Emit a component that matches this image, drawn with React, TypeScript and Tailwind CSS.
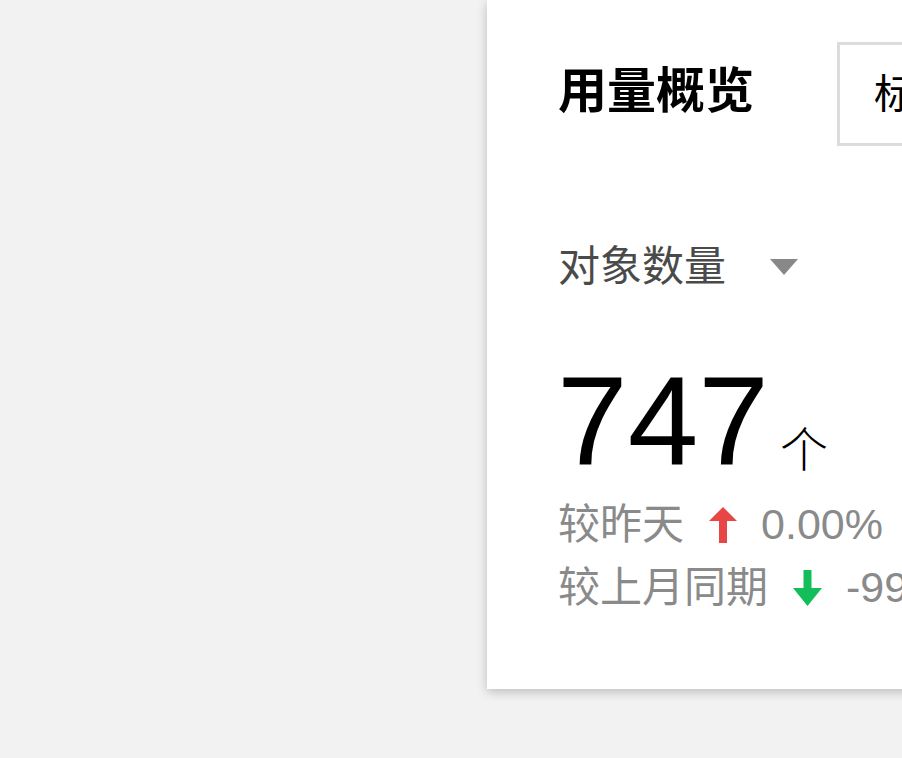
import React from "react";

const font = "font-['Liberation_Sans','Noto_Sans_CJK_SC',sans-serif]";

function ArrowUp() {
  return (
    <svg width="28" height="36" viewBox="0 0 28 36" className="shrink-0">
      <polygon points="14,0 28,14 0,14" fill="#e84545" />
      <rect x="10" y="13" width="8" height="23" fill="#e84545" />
    </svg>
  );
}

function ArrowDown() {
  return (
    <svg width="29" height="36" viewBox="0 0 29 36" className="shrink-0">
      <rect x="10.5" y="0" width="8" height="20" fill="#12bd5a" />
      <polygon points="0,18 29,18 14.5,36" fill="#12bd5a" />
    </svg>
  );
}

export default function App() {
  return (
    <div className={`w-[902px] h-[758px] overflow-hidden bg-[#f2f2f2] ${font}`}>
      <div className="ml-[487px] w-[560px] h-[689px] bg-white shadow-[0_3px_10px_rgba(0,0,0,0.22)] pl-[71px] pt-[42px]">
        {/* header */}
        <div className="flex items-center">
          <div className="w-[279px] shrink-0 whitespace-nowrap text-[49px] leading-none font-bold text-black -mt-[6px]">用量概览</div>
          <div className="h-[104px] shrink-0 whitespace-nowrap border-[3px] border-[#dcdcdc] flex items-center px-[34px] text-[40px] text-black">
            标准
          </div>
        </div>

        {/* metric selector */}
        <div className="mt-[100px] flex items-center">
          <span className="text-[42px] leading-none text-[#4a4a4a]">对象数量</span>
          <svg width="28" height="16" viewBox="0 0 28 16" className="ml-[44px]">
            <polygon points="0,0 28,0 14,16" fill="#888888" />
          </svg>
        </div>

        {/* value */}
        <div className="mt-[70px] flex items-baseline">
          <span className="text-[127px] leading-none text-black -ml-[1px]">747</span>
          <span className="ml-[11px] text-[48px] leading-none text-black font-light translate-y-[2px]">个</span>
        </div>

        {/* comparisons */}
        <div className="mt-[8px] text-[42px] leading-[63px] text-[#8a8a8a]">
          <div className="flex items-center whitespace-nowrap">
            <span>较昨天</span>
            <span className="ml-[25px]"><ArrowUp /></span>
            <span className="ml-[24px] text-[43px]">0.00%</span>
          </div>
          <div className="flex items-center whitespace-nowrap">
            <span>较上月同期</span>
            <span className="ml-[25px]"><ArrowDown /></span>
            <span className="ml-[24px] text-[43px]">-99.87%</span>
          </div>
        </div>
      </div>
    </div>
  );
}
